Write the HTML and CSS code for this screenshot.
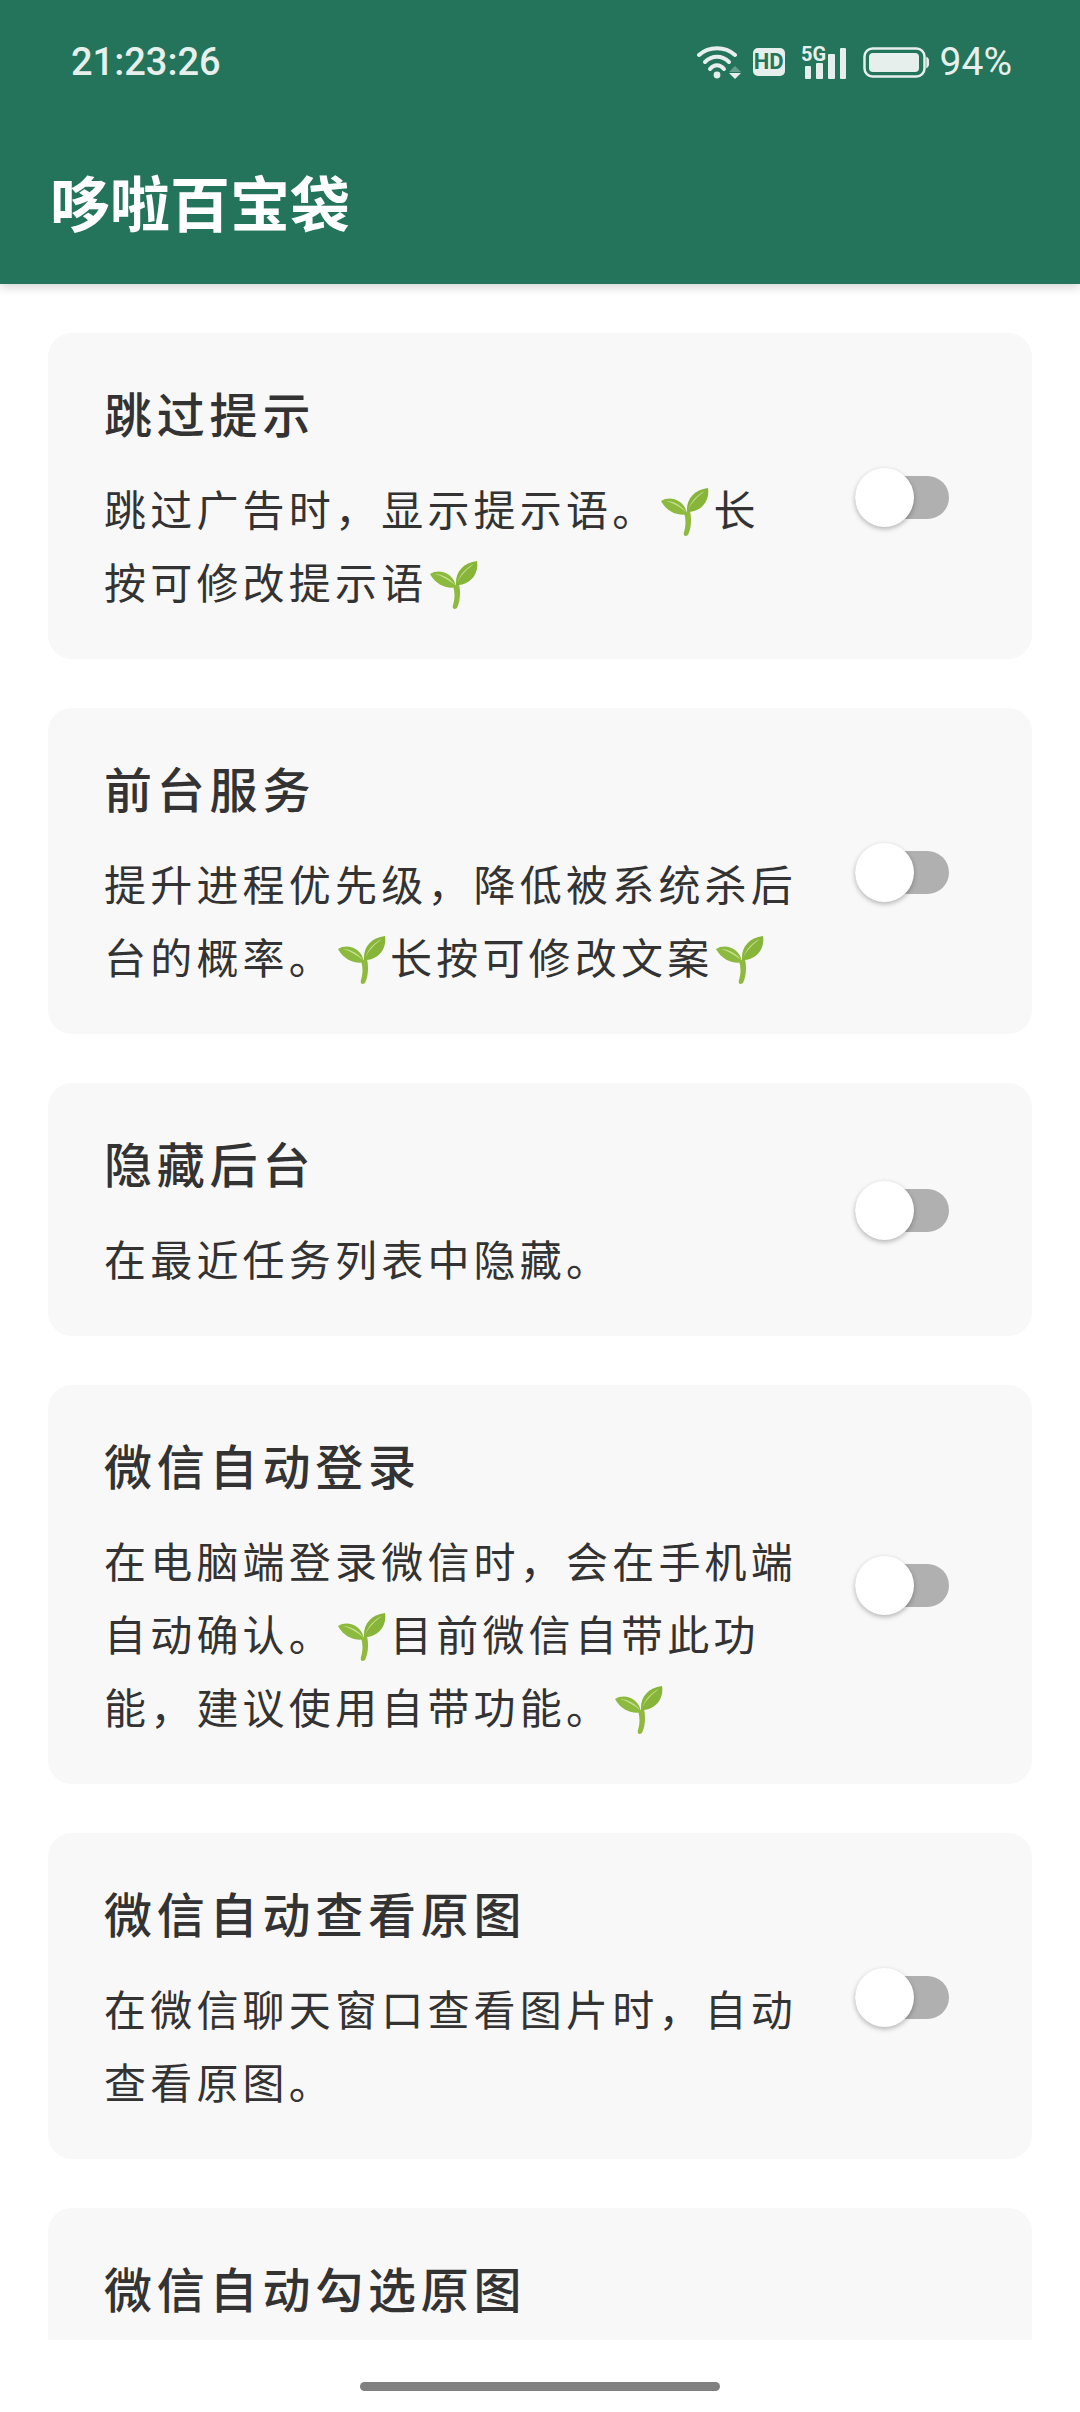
FILE: index.html
```html
<!DOCTYPE html>
<html lang="zh-CN">
<head>
    <meta charset="UTF-8">
    <meta name="viewport" content="width=device-width, initial-scale=1.0">
    <title>哆啦百宝袋</title>
    <link rel="stylesheet" href="styles.css">
</head>
<body>
    <svg class="defs" width="0" height="0">
        <symbol id="sprout" viewBox="0 0 48 48">
            <path d="M27 47C24 49 22 48 23 44 25 37 25 31 23 25L29 23C31 31 30 41 27 47Z" fill="#8fb93f"/>
            <path d="M26 26C20 28 7 26 0 13 9 7 24 12 26 26Z" fill="#8cba3e"/>
            <path d="M26 24C25 11 33 2 47 0 49 12 41 24 26 24Z" fill="#86b53a"/>
            <path d="M25 24C20 17 12 13 5 13 12 15 19 19 25 24ZM27 22C31 14 37 8 44 3 37 6 30 13 27 22Z" fill="#c9e08f"/>
        </symbol>
    </svg>

    <header class="app-header">
        <div class="status-bar">
            <span class="clock">21:23:26</span>
            <div class="status-icons">
                <svg class="icon-wifi" width="46" height="33" viewBox="0 0 46 33" fill="none" stroke="#e6efeb" stroke-linecap="round">
                    <path d="M2 9C12 0 28 0 38 9" stroke-width="4"/>
                    <path d="M8 16C15 9 25 9 32 16" stroke-width="4"/>
                    <path d="M13 23C17 18 23 18 27 23" stroke-width="4"/>
                    <circle cx="20" cy="29" r="3.4" fill="#e6efeb" stroke="none"/>
                    <path d="M32 26H44L38 20Z" fill="#e6efeb" fill-opacity="0.35" stroke="none"/>
                    <path d="M32 27H44L38 33Z" fill="#e6efeb" stroke="none"/>
                </svg>
                <span class="hd-badge">HD</span>
                <svg class="icon-signal" width="46" height="33" viewBox="0 0 46 33" fill="#e6efeb">
                    <text x="0" y="15" class="five-g">5G</text>
                    <rect x="4" y="20" width="6" height="13" rx="1"/>
                    <rect x="15" y="17" width="7" height="16" rx="1"/>
                    <rect x="27" y="8" width="7" height="25" rx="1"/>
                    <rect x="39" y="2" width="6" height="31" rx="1"/>
                </svg>
                <svg class="icon-battery" width="66" height="31" viewBox="0 0 66 31">
                    <rect x="1.5" y="1.5" width="60" height="28" rx="8" fill="none" stroke="#e6efeb" stroke-width="2.5"/>
                    <rect x="6" y="6" width="50" height="19" rx="4" fill="#e6efeb"/>
                    <path d="M64 11C66 12 66 19 64 20Z" fill="#e6efeb" stroke="#e6efeb" stroke-width="1.5"/>
                </svg>
                <span class="battery-text">94%</span>
            </div>
        </div>
        <h1 class="app-title">哆啦百宝袋</h1>
    </header>

    <main class="settings-list">
        <section class="card">
            <div class="card-text">
                <h2>跳过提示</h2>
                <p>跳过广告时&#xFF0C;显示提示语。<svg class="sprout"><use href="#sprout"/></svg>长按可修改提示语<svg class="sprout"><use href="#sprout"/></svg></p>
            </div>
            <div class="switch"><span class="thumb"></span></div>
        </section>
        <section class="card">
            <div class="card-text">
                <h2>前台服务</h2>
                <p>提升进程优先级&#xFF0C;降低被系统杀后台的概率。<svg class="sprout"><use href="#sprout"/></svg>长按可修改文案<svg class="sprout"><use href="#sprout"/></svg></p>
            </div>
            <div class="switch"><span class="thumb"></span></div>
        </section>
        <section class="card">
            <div class="card-text">
                <h2>隐藏后台</h2>
                <p>在最近任务列表中隐藏。</p>
            </div>
            <div class="switch"><span class="thumb"></span></div>
        </section>
        <section class="card">
            <div class="card-text">
                <h2>微信自动登录</h2>
                <p>在电脑端登录微信时&#xFF0C;会在手机端自动确认。<svg class="sprout"><use href="#sprout"/></svg>目前微信自带此功能&#xFF0C;建议使用自带功能。<svg class="sprout"><use href="#sprout"/></svg></p>
            </div>
            <div class="switch"><span class="thumb"></span></div>
        </section>
        <section class="card">
            <div class="card-text">
                <h2>微信自动查看原图</h2>
                <p>在微信聊天窗口查看图片时&#xFF0C;自动查看原图。</p>
            </div>
            <div class="switch"><span class="thumb"></span></div>
        </section>
        <section class="card card-cut">
            <div class="card-text">
                <h2>微信自动勾选原图</h2>
            </div>
        </section>
    </main>

    <div class="nav-bar"><span class="home-pill"></span></div>
</body>
</html>
```

FILE: styles.css
```css
* {
    box-sizing: border-box;
}
html, body {
    margin: 0;
    height: 2412px;
    overflow: hidden;
}
body {
    display: flex;
    flex-direction: column;
    background-color: #fff;
    font-family: "Noto Sans CJK SC", "Noto Sans", sans-serif;
    color: #333;
}
.defs {
    position: absolute;
}
.app-header {
    height: 284px;
    flex-shrink: 0;
    background-color: #23745a;
    box-shadow: 0 3px 10px rgba(0, 0, 0, 0.18);
    position: relative;
    z-index: 1;
    color: #fff;
}
.status-bar {
    height: 124px;
    padding: 0 68px 0 71px;
    display: flex;
    justify-content: space-between;
    align-items: center;
    font-family: Roboto, sans-serif;
    color: #e6efeb;
}
.clock {
    font-size: 38px;
    font-weight: 500;
}
.status-icons {
    display: flex;
    align-items: center;
}
.icon-wifi {
    margin-right: 10px;
}
.hd-badge {
    width: 32px;
    height: 28px;
    margin-right: 16px;
    border-radius: 5px;
    background-color: #e6efeb;
    color: #23745a;
    font-size: 22px;
    font-weight: 700;
    line-height: 28px;
    text-align: center;
}
.five-g {
    font-family: Roboto, sans-serif;
    font-size: 20px;
    font-weight: 700;
}
.icon-signal {
    margin-right: 16px;
}
.icon-battery {
    margin-right: 11px;
}
.battery-text {
    font-size: 39px;
}
.app-title {
    margin: 37px 0 0;
    padding-left: 50px;
    font-size: 60px;
    font-weight: 700;
    line-height: 80px;
}
.settings-list {
    height: 2056px;
    flex-shrink: 0;
    padding: 49px 48px 0;
    display: flex;
    flex-direction: column;
    gap: 49px;
    overflow: hidden;
}
.card {
    flex-shrink: 0;
    display: flex;
    align-items: center;
    justify-content: space-between;
    padding: 44px 83px 42px 56px;
    background-color: #f8f8f8;
    border-radius: 24px;
}
/* runs past the bottom of the list, only the title shows */
.card-cut {
    height: 326px;
    align-items: flex-start;
}
.card-text {
    width: 696px;
}
.card h2 {
    margin: 0 0 24px;
    font-size: 48px;
    font-weight: 500;
    line-height: 70px;
    letter-spacing: 4.8px;
}
.card p {
    margin: 0;
    font-size: 42px;
    font-weight: 400;
    line-height: 73px;
    letter-spacing: 4.2px;
}
.sprout {
    width: 48px;
    height: 48px;
    margin: 0 4px 0 3px;
    vertical-align: -10px;
}
.switch {
    position: relative;
    width: 94px;
    height: 43px;
    flex-shrink: 0;
    background-color: #b0b0b0;
    border-radius: 22px;
}
.thumb {
    position: absolute;
    left: 0;
    top: -8px;
    width: 59px;
    height: 59px;
    border-radius: 50%;
    background-color: #fff;
    box-shadow: 0 2px 5px rgba(0, 0, 0, 0.28);
}
.nav-bar {
    flex: 1;
    display: flex;
    justify-content: center;
    align-items: flex-end;
    padding-bottom: 21px;
}
.home-pill {
    width: 360px;
    height: 9px;
    border-radius: 5px;
    background-color: #808080;
}
```
